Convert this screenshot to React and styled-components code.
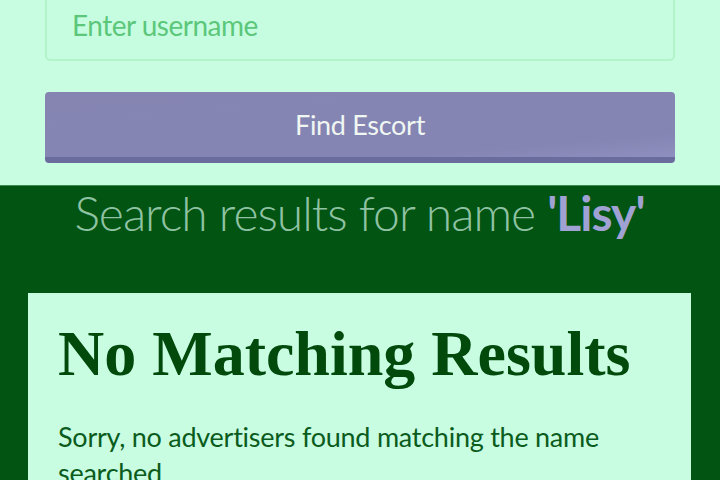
import React from 'react';
import styled, { createGlobalStyle } from 'styled-components';

const GlobalStyle = createGlobalStyle`
    body {
        margin: 0;
        background: #c8fde2;
        font-family: Lato, "Liberation Sans", sans-serif;
    }
`;

const Page = styled.div`
    width: 720px;
    height: 480px;
    overflow: hidden;
`;

const SearchForm = styled.form`
    display: flex;
    flex-direction: column;
    gap: 31px;
    padding: 0 45px 22px 45px;
    background: #c8fde2;
`;

const NameInput = styled.input`
    box-sizing: border-box;
    height: 73px;
    margin-top: -12px;
    padding: 0 25px;
    border: 2px solid #b2f4c8;
    border-radius: 5px;
    background: #c6fde0;
    font-family: Lato, sans-serif;
    font-size: 28px;
    letter-spacing: -0.5px;
    color: #2d8f44;
    outline: none;

    &::placeholder {
        color: #5cc77a;
    }
`;

const FindButton = styled.button`
    box-sizing: border-box;
    height: 71px;
    border: 0;
    border-bottom: 6px solid #6b6c9e;
    border-radius: 4px;
    background: linear-gradient(175deg, #8685b2 0%, #8485b3 80%, #8e8fbe 100%);
    color: #f0f6f2;
    font-family: Lato, sans-serif;
    font-size: 27px;
    letter-spacing: -0.3px;
    cursor: pointer;
`;

const Results = styled.section`
    background: #015411;
    border-top: 1px solid #3d8a4c;
    padding: 2px 29px 0 28px;
`;

const ResultsTitle = styled.h2`
    margin: 0 0 55px 0;
    text-align: center;
    font-family: Lato, sans-serif;
    font-weight: 300;
    font-size: 48px;
    letter-spacing: -1px;
    line-height: 50px;
    color: #8fc2a3;

    strong {
        font-weight: 700;
        color: #9fa2d2;
    }
`;

const Card = styled.div`
    background: #c8fde2;
    padding: 26px 30px 20px 30px;
`;

const CardHeading = styled.h1`
    margin: 0 0 30px 0;
    font-family: "Liberation Serif", serif;
    font-weight: 700;
    font-size: 64px;
    line-height: 70px;
    color: #024a0c;
`;

const CardText = styled.p`
    margin: 0;
    font-family: Lato, sans-serif;
    font-size: 27px;
    letter-spacing: -0.25px;
    line-height: 36px;
    color: #0b5c1c;
`;

function App() {
    const name = 'Lisy';

    return (
        <Page>
            <GlobalStyle />
            <SearchForm onSubmit={(e) => e.preventDefault()}>
                <NameInput placeholder="Enter username" />
                <FindButton type="submit">Find Escort</FindButton>
            </SearchForm>
            <Results>
                <ResultsTitle>
                    Search results for name <strong>'{name}'</strong>
                </ResultsTitle>
                <Card>
                    <CardHeading>No Matching Results</CardHeading>
                    <CardText>Sorry, no advertisers found matching the name searched</CardText>
                </Card>
            </Results>
        </Page>
    );
}

export default App;
